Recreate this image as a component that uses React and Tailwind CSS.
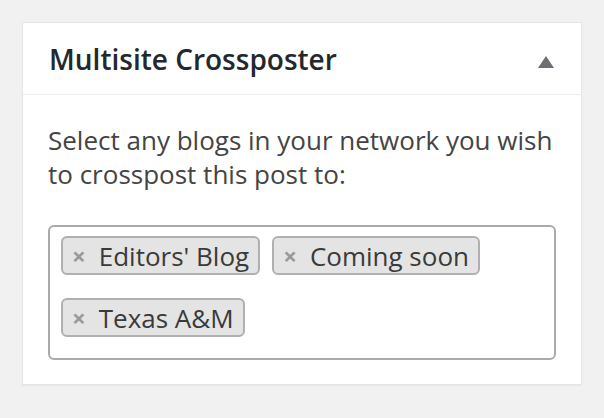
import React from "react";

function Tag({ label }) {
  return (
    <div className="flex h-[39px] items-center rounded-[6px] border-2 border-[#b0b0b0] bg-[#e4e4e4] pl-[9px] pr-[9px]">
      <span className="mr-[13px] text-[24px] font-bold leading-none text-[#999]">×</span>
      <span className="text-[26px] leading-none text-[#3a3a3a]">{label}</span>
    </div>
  );
}

export default function App() {
  return (
    <div
      className="min-h-[418px] w-[604px] bg-[#f1f1f1] pl-[22px] pt-[22px]"
      style={{ fontFamily: '"Open Sans", "Noto Sans", sans-serif' }}
    >
      <div className="w-[560px] border border-[#e5e5e5] bg-white shadow-[0_1px_1px_rgba(0,0,0,0.04)]">
        <div className="flex h-[72px] items-center justify-between border-b border-[#eeeeee] pl-[26px] pr-[27px]">
          <h2 className="text-[28px] font-semibold text-[#23282d]">Multisite Crossposter</h2>
          <svg width="16" height="12" viewBox="0 0 16 12" className="mt-[6px]">
            <polygon points="8,0 16,12 0,12" fill="#6c7075" />
          </svg>
        </div>
        <div className="px-[25px] pb-[24px] pt-[28px]">
          <p className="text-[26px] leading-[34px] text-[#444]">
            Select any blogs in your network you wish to crosspost this post to:
          </p>
          <div className="mt-[34px] h-[135px] rounded-[6px] border-2 border-[#aaa] pl-[11px] pr-[11px] pt-[9px]">
            <div className="flex flex-wrap gap-x-[12px] gap-y-[23px]">
              <Tag label="Editors' Blog" />
              <Tag label="Coming soon" />
              <Tag label="Texas A&M" />
            </div>
          </div>
        </div>
      </div>
    </div>
  );
}
